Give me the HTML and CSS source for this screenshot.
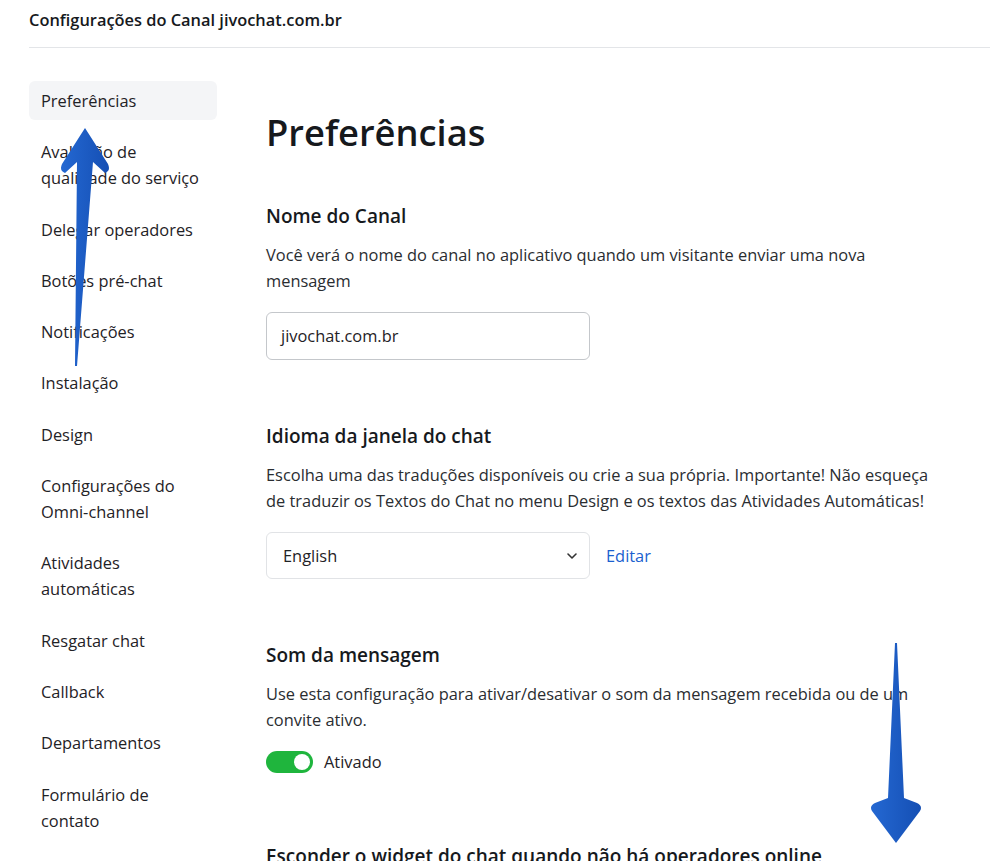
FILE: index.html
```html
<!DOCTYPE html>
<html lang="pt-BR">
<head>
<meta charset="utf-8">
<title>Configurações do Canal jivochat.com.br</title>
<link rel="stylesheet" href="styles.css">
</head>
<body>
<header class="topbar">
  <div class="topbar-title">Configurações do Canal jivochat.com.br</div>
</header>
<div class="layout">
  <nav class="sidebar">
    <ul class="menu">
      <li class="menu-item active">Preferências</li>
      <li class="menu-item">Avaliação de qualidade do serviço</li>
      <li class="menu-item">Delegar operadores</li>
      <li class="menu-item">Botões pré-chat</li>
      <li class="menu-item">Notificações</li>
      <li class="menu-item">Instalação</li>
      <li class="menu-item">Design</li>
      <li class="menu-item">Configurações do Omni-channel</li>
      <li class="menu-item">Atividades automáticas</li>
      <li class="menu-item">Resgatar chat</li>
      <li class="menu-item">Callback</li>
      <li class="menu-item">Departamentos</li>
      <li class="menu-item">Formulário de contato</li>
    </ul>
  </nav>
  <main class="content">
    <h1 class="page-title">Preferências</h1>

    <section class="section">
      <h2 class="section-title">Nome do Canal</h2>
      <p class="section-desc">Você verá o nome do canal no aplicativo quando um visitante enviar uma nova mensagem</p>
      <div class="field">jivochat.com.br</div>
    </section>

    <section class="section">
      <h2 class="section-title">Idioma da janela do chat</h2>
      <p class="section-desc">Escolha uma das traduções disponíveis ou crie a sua própria. Importante! Não esqueça de traduzir os Textos do Chat no menu Design e os textos das Atividades Automáticas!</p>
      <div class="select-row">
        <div class="select">
          <span>English</span>
          <svg class="chevron" width="12" height="8" viewBox="0 0 12 8"><path d="M2 2 L6 6 L10 2" fill="none" stroke="#333" stroke-width="1.6" stroke-linecap="round" stroke-linejoin="round"/></svg>
        </div>
        <a class="link">Editar</a>
      </div>
    </section>

    <section class="section">
      <h2 class="section-title">Som da mensagem</h2>
      <p class="section-desc">Use esta configuração para ativar/desativar o som da mensagem recebida ou de um convite ativo.</p>
      <div class="toggle-row">
        <span class="toggle"><span class="knob"></span></span>
        <span class="toggle-label">Ativado</span>
      </div>
    </section>

    <section class="section section-last">
      <h2 class="section-title">Esconder o widget do chat quando não há operadores online</h2>
    </section>
  </main>
</div>

<svg class="annotations" width="997" height="861" viewBox="0 0 997 861">
  <defs>
    <linearGradient id="ag" x1="0" y1="0" x2="1" y2="0">
      <stop offset="0" stop-color="#2468d2"/>
      <stop offset="1" stop-color="#154fb4"/>
    </linearGradient>
  </defs>
  <path d="M85 128 L108 164 Q111 171 105 173 L93 162 L77 366 L75 366 L77 162 L65 173 Q59 171 62 164 Z" fill="url(#ag)"/>
  <path d="M895 643 L897 643 L904 798 L917 803 Q923 806 920 811 L896 843 L872 811 Q869 806 875 803 L888 798 Z" fill="url(#ag)"/>
</svg>
</body>
</html>
```
FILE: styles.css
```css
html, body {
  margin: 0;
  padding: 0;
  background: #ffffff;
}
body {
  font-family: "Open Sans", "Noto Sans", sans-serif;
  color: #1f2226;
  font-size: 16.4px;
  line-height: 26px;
  position: relative;
  overflow: hidden;
  height: 861px;
}
.topbar {
  margin: 0 7px 0 29px;
  height: 48px;
  border-bottom: 1px solid #e3e5e8;
  box-sizing: border-box;
}
.topbar-title {
  padding-top: 7px;
  font-size: 16.4px;
  font-weight: 600;
  color: #16191d;
}
.layout {
  display: flex;
  padding-left: 29px;
  margin-top: 33px;
}
.sidebar {
  width: 188px;
  flex: 0 0 188px;
}
.menu {
  list-style: none;
  margin: 0;
  padding: 0;
  display: flex;
  flex-direction: column;
  gap: 12.3px;
}
.menu-item {
  padding: 7px 12px 6px;
  border-radius: 6px;
  color: #1f2226;
}
.menu-item.active {
  background: #f4f5f7;
}
.content {
  margin-left: 49px;
  flex: 1;
}
.page-title {
  margin: 27px 0 0;
  font-size: 36.3px;
  line-height: 48px;
  font-weight: 600;
  color: #16191d;
}
.section {
  margin-top: 47px;
}
.section + .section {
  margin-top: 63px;
}
.section.section-last {
  margin-top: 68px;
}
.section-title {
  margin: 0;
  font-size: 19px;
  line-height: 26px;
  font-weight: 600;
  color: #16191d;
}
.section-desc {
  margin: 13px 0 0;
  max-width: 680px;
  color: #2a2d31;
}
.field {
  margin-top: 18px;
  width: 324px;
  height: 48px;
  box-sizing: border-box;
  border: 1px solid #c4c7cb;
  border-radius: 6px;
  padding: 0 14px;
  display: flex;
  align-items: center;
}
.select-row {
  margin-top: 18px;
  display: flex;
  align-items: center;
  gap: 16px;
}
.select {
  width: 324px;
  height: 47px;
  box-sizing: border-box;
  border: 1px solid #e1e3e6;
  border-radius: 6px;
  padding: 0 11px 0 16px;
  display: flex;
  align-items: center;
  justify-content: space-between;
}
.chevron {
  display: block;
}
.link {
  color: #1b5fcf;
  text-decoration: none;
}
.toggle-row {
  margin-top: 16px;
  display: flex;
  align-items: center;
  gap: 11px;
}
.toggle {
  width: 47px;
  height: 22px;
  border-radius: 11px;
  background: #1fb53d;
  position: relative;
  display: inline-block;
}
.knob {
  position: absolute;
  right: 3px;
  top: 3px;
  width: 16px;
  height: 16px;
  border-radius: 50%;
  background: #ffffff;
}
.annotations {
  position: absolute;
  left: 0;
  top: 0;
  pointer-events: none;
}
```
